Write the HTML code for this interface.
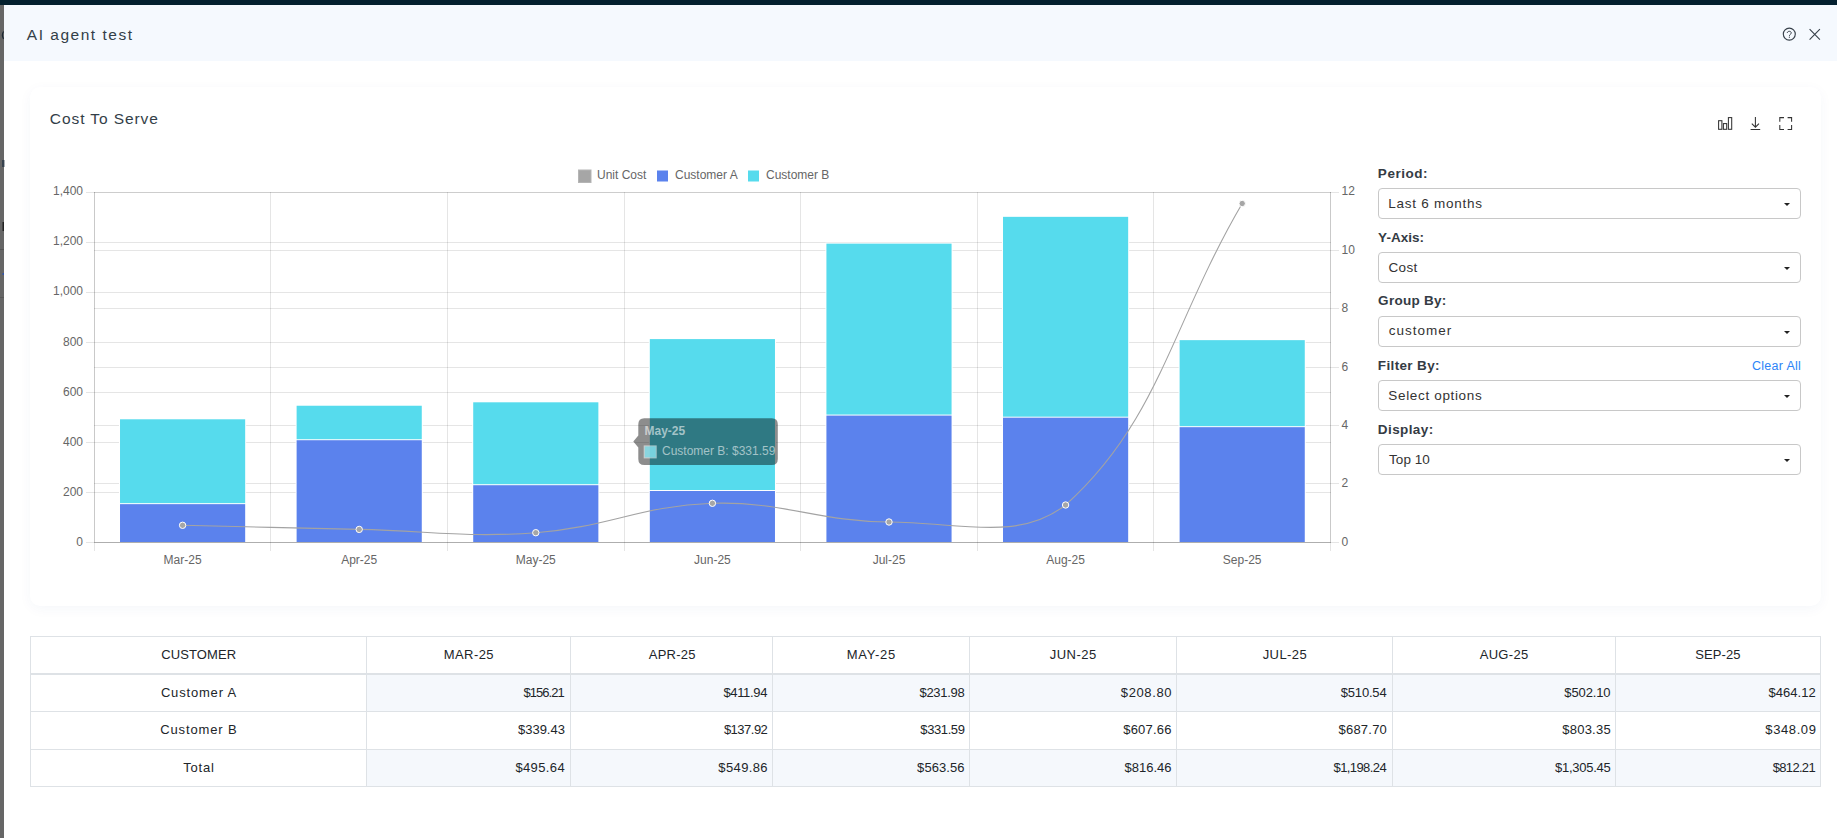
<!DOCTYPE html>
<html><head><meta charset="utf-8"><style>
*{box-sizing:border-box;margin:0;padding:0}
html,body{width:1837px;height:838px;overflow:hidden;background:#fff;font-family:"Liberation Sans",sans-serif}
.a{position:absolute}
</style></head><body>
<div class="a" style="left:0;top:0;width:1837px;height:5px;background:#03202f"></div>
<div class="a" style="left:0;top:5px;width:4px;height:833px;background:#666"></div>
<svg class="a" style="left:0;top:0" width="5" height="320"><path d="M3.6,31.5 Q1.2,35 3.6,38.8" stroke="#1d2a36" stroke-width="1.3" fill="none"/><rect x="2" y="160" width="2.5" height="7" fill="#2c3a48" opacity="0.8"/><rect x="2.5" y="222" width="1.5" height="9" fill="#222"/><rect x="0" y="249" width="4" height="1" fill="#555"/><rect x="2.5" y="273" width="1.5" height="2" fill="#3355aa"/><rect x="0" y="297" width="4" height="1" fill="#585858"/></svg>
<div class="a" style="left:4px;top:5px;width:1833px;height:56px;background:#f5f9fe"></div>
<div class="a" style="left:30px;top:87px;width:1790.7px;height:519px;border-radius:10px;background:#fff;box-shadow:0 3px 13px rgba(30,70,150,0.042)"></div>
<svg width="1837" height="838" viewBox="0 0 1837 838" style="position:absolute;left:0;top:0" font-family="Liberation Sans">
<g shape-rendering="crispEdges" stroke-width="1"><line x1="86" y1="192.5" x2="1330.5" y2="192.5" stroke="rgba(0,0,0,0.1)"/><line x1="86" y1="242.5" x2="1330.5" y2="242.5" stroke="rgba(0,0,0,0.1)"/><line x1="86" y1="292.5" x2="1330.5" y2="292.5" stroke="rgba(0,0,0,0.1)"/><line x1="86" y1="342.5" x2="1330.5" y2="342.5" stroke="rgba(0,0,0,0.1)"/><line x1="86" y1="392.5" x2="1330.5" y2="392.5" stroke="rgba(0,0,0,0.1)"/><line x1="86" y1="442.5" x2="1330.5" y2="442.5" stroke="rgba(0,0,0,0.1)"/><line x1="86" y1="492.5" x2="1330.5" y2="492.5" stroke="rgba(0,0,0,0.1)"/><line x1="86" y1="542.5" x2="1330.5" y2="542.5" stroke="rgba(0,0,0,0.1)"/><line x1="94.3" y1="192.5" x2="1339" y2="192.5" stroke="rgba(0,0,0,0.1)"/><line x1="94.3" y1="250.5" x2="1339" y2="250.5" stroke="rgba(0,0,0,0.1)"/><line x1="94.3" y1="308.5" x2="1339" y2="308.5" stroke="rgba(0,0,0,0.1)"/><line x1="94.3" y1="367.5" x2="1339" y2="367.5" stroke="rgba(0,0,0,0.1)"/><line x1="94.3" y1="425.5" x2="1339" y2="425.5" stroke="rgba(0,0,0,0.1)"/><line x1="94.3" y1="483.5" x2="1339" y2="483.5" stroke="rgba(0,0,0,0.1)"/><line x1="94.3" y1="542.5" x2="1339" y2="542.5" stroke="rgba(0,0,0,0.1)"/><line x1="94.5" y1="192.0" x2="94.5" y2="551.0" stroke="rgba(0,0,0,0.1)"/><line x1="270.5" y1="192.0" x2="270.5" y2="551.0" stroke="rgba(0,0,0,0.1)"/><line x1="447.5" y1="192.0" x2="447.5" y2="551.0" stroke="rgba(0,0,0,0.1)"/><line x1="624.5" y1="192.0" x2="624.5" y2="551.0" stroke="rgba(0,0,0,0.1)"/><line x1="800.5" y1="192.0" x2="800.5" y2="551.0" stroke="rgba(0,0,0,0.1)"/><line x1="977.5" y1="192.0" x2="977.5" y2="551.0" stroke="rgba(0,0,0,0.1)"/><line x1="1153.5" y1="192.0" x2="1153.5" y2="551.0" stroke="rgba(0,0,0,0.1)"/><line x1="1330.5" y1="192.0" x2="1330.5" y2="551.0" stroke="rgba(0,0,0,0.1)"/><line x1="94.5" y1="192.0" x2="94.5" y2="542.0" stroke="rgba(0,0,0,0.12)"/><line x1="1330.5" y1="192.0" x2="1330.5" y2="542.0" stroke="rgba(0,0,0,0.12)"/><line x1="94.3" y1="542.5" x2="1330.5" y2="542.5" stroke="rgba(0,0,0,0.15)"/></g>
<rect x="119.02" y="418.29" width="127.15" height="123.71" fill="#fff"/><rect x="120.02" y="419.29" width="125.15" height="83.86" fill="#56dbed"/><rect x="120.02" y="504.15" width="125.15" height="37.85" fill="#5b82ed"/><rect x="295.62" y="404.74" width="127.15" height="137.26" fill="#fff"/><rect x="296.62" y="405.74" width="125.15" height="33.48" fill="#56dbed"/><rect x="296.62" y="440.22" width="125.15" height="101.78" fill="#5b82ed"/><rect x="472.22" y="401.31" width="127.15" height="140.69" fill="#fff"/><rect x="473.22" y="402.31" width="125.15" height="81.90" fill="#56dbed"/><rect x="473.22" y="485.21" width="125.15" height="56.79" fill="#5b82ed"/><rect x="648.82" y="338.09" width="127.15" height="203.91" fill="#fff"/><rect x="649.82" y="339.09" width="125.15" height="150.92" fill="#56dbed"/><rect x="649.82" y="491.00" width="125.15" height="51.00" fill="#5b82ed"/><rect x="825.42" y="242.64" width="127.15" height="299.36" fill="#fff"/><rect x="826.42" y="243.64" width="125.15" height="170.93" fill="#56dbed"/><rect x="826.42" y="415.57" width="125.15" height="126.43" fill="#5b82ed"/><rect x="1002.02" y="215.84" width="127.15" height="326.16" fill="#fff"/><rect x="1003.02" y="216.84" width="125.15" height="199.84" fill="#56dbed"/><rect x="1003.02" y="417.68" width="125.15" height="124.32" fill="#5b82ed"/><rect x="1178.62" y="339.15" width="127.15" height="202.85" fill="#fff"/><rect x="1179.62" y="340.15" width="125.15" height="86.02" fill="#56dbed"/><rect x="1179.62" y="427.17" width="125.15" height="114.83" fill="#5b82ed"/>
<path d="M182.60,525.30 C253.24,526.94 288.56,527.92 359.20,529.40 C429.84,530.88 465.64,537.88 535.80,532.70 C606.92,527.44 641.47,505.45 712.40,503.30 C782.75,501.17 818.33,521.66 889.00,522.00 C959.61,522.34 1018.02,542.00 1065.60,505.00 C1159.30,420.50 1171.56,324.10 1242.20,203.50" fill="none" stroke="#a3a3a3" stroke-width="1.1"/>
<circle cx="182.60" cy="525.30" r="3.2" fill="#a6a6a6" stroke="#fff" stroke-width="1"/>
<circle cx="359.20" cy="529.40" r="3.2" fill="#a6a6a6" stroke="#fff" stroke-width="1"/>
<circle cx="535.80" cy="532.70" r="3.2" fill="#a6a6a6" stroke="#fff" stroke-width="1"/>
<circle cx="712.40" cy="503.30" r="3.2" fill="#a6a6a6" stroke="#fff" stroke-width="1"/>
<circle cx="889.00" cy="522.00" r="3.2" fill="#a6a6a6" stroke="#fff" stroke-width="1"/>
<circle cx="1065.60" cy="505.00" r="3.2" fill="#a6a6a6" stroke="#fff" stroke-width="1"/>
<circle cx="1242.20" cy="203.50" r="3.2" fill="#a6a6a6" stroke="#fff" stroke-width="1"/>
<g font-size="12" fill="#666"><text x="83" y="546" text-anchor="end">0</text><text x="83" y="496" text-anchor="end">200</text><text x="83" y="446" text-anchor="end">400</text><text x="83" y="396" text-anchor="end">600</text><text x="83" y="346" text-anchor="end">800</text><text x="83" y="295" text-anchor="end">1,000</text><text x="83" y="245" text-anchor="end">1,200</text><text x="83" y="195" text-anchor="end">1,400</text><text x="1341.5" y="546">0</text><text x="1341.5" y="487">2</text><text x="1341.5" y="429">4</text><text x="1341.5" y="371">6</text><text x="1341.5" y="312">8</text><text x="1341.5" y="254">10</text><text x="1341.5" y="195">12</text><text x="182.6" y="563.8" text-anchor="middle">Mar-25</text><text x="359.2" y="563.8" text-anchor="middle">Apr-25</text><text x="535.8" y="563.8" text-anchor="middle">May-25</text><text x="712.4" y="563.8" text-anchor="middle">Jun-25</text><text x="889.0" y="563.8" text-anchor="middle">Jul-25</text><text x="1065.6" y="563.8" text-anchor="middle">Aug-25</text><text x="1242.2" y="563.8" text-anchor="middle">Sep-25</text></g>
<g font-size="12" fill="#666"><rect x="578.5" y="170" width="12.5" height="12.5" fill="#a6a6a6" stroke="#b5b5b5" stroke-width="1"/><text x="597" y="178.7">Unit Cost</text><rect x="657" y="170.5" width="11" height="11" fill="#5b82ed"/><text x="675" y="178.7">Customer A</text><rect x="748" y="170.5" width="11" height="11" fill="#56dbed"/><text x="766" y="178.7">Customer B</text></g>
<path d="M644.3,418.3 H771.8 Q777.8,418.3 777.8,424.3 V458.9 Q777.8,464.9 771.8,464.9 H644.3 Q638.3,464.9 638.3,458.9 V447.6 L633.3,441.6 L638.3,435.6 V424.3 Q638.3,418.3 644.3,418.3 Z" fill="#000" fill-opacity="0.448"/>
<text x="644.5" y="434.8" font-size="12" font-weight="700" fill="#fff" fill-opacity="0.56">May-25</text>
<rect x="643.7" y="445.4" width="13" height="13" fill="#fff" fill-opacity="0.56"/>
<rect x="644.7" y="446.4" width="11" height="11" fill="#56dbed" fill-opacity="0.56"/>
<text x="662" y="454.9" font-size="12" fill="#fff" fill-opacity="0.56">Customer B: $331.59</text>
<g fill="none" stroke="#37404a" stroke-width="1.0">
<circle cx="1789.3" cy="34.1" r="6.0" stroke-width="1.15"/>
<path d="M1787.3,33.0 C1787.3,31.9 1788.2,31.3 1789.3,31.3 C1790.4,31.3 1791.3,32.0 1791.3,33.0 C1791.3,34.2 1789.4,34.4 1789.4,35.8"/>
</g>
<circle cx="1789.4" cy="37.2" r="0.6" fill="#37404a"/>
<path d="M1809.6,29.1 L1819.9,39.7 M1819.9,29.1 L1809.6,39.7" stroke="#37404a" stroke-width="1.1" fill="none"/>
<g fill="none" stroke="#333" stroke-width="1.05">
<rect x="1718.6" y="120.7" width="3.3" height="8.6"/><rect x="1723.4" y="123.6" width="3.3" height="5.7"/><rect x="1728.4" y="117.6" width="3.3" height="11.7"/>
<path d="M1755.4,117 V127.4 M1751.8,123.6 L1755.4,127.2 L1759,123.6 M1750.6,129.5 H1760.2"/>
<path d="M1779.8,121.7 V117.6 H1784 M1787.6,117.6 H1791.6 V121.7 M1791.6,125.1 V129.4 H1787.6 M1784,129.4 H1779.8 V125.1"/>
</g>
<rect x="1378.5" y="188.5" width="422" height="30" rx="3.5" fill="#fff" stroke="#c8c8c8" stroke-width="1"/>
<path d="M1784,203 L1790,203 L1787,206 Z" fill="#222"/>
<rect x="1378.5" y="252.5" width="422" height="30" rx="3.5" fill="#fff" stroke="#c8c8c8" stroke-width="1"/>
<path d="M1784,267 L1790,267 L1787,270 Z" fill="#222"/>
<rect x="1378.5" y="316.5" width="422" height="30" rx="3.5" fill="#fff" stroke="#c8c8c8" stroke-width="1"/>
<path d="M1784,331 L1790,331 L1787,334 Z" fill="#222"/>
<rect x="1378.5" y="380.5" width="422" height="30" rx="3.5" fill="#fff" stroke="#c8c8c8" stroke-width="1"/>
<path d="M1784,395 L1790,395 L1787,398 Z" fill="#222"/>
<rect x="1378.5" y="444.5" width="422" height="30" rx="3.5" fill="#fff" stroke="#c8c8c8" stroke-width="1"/>
<path d="M1784,459 L1790,459 L1787,462 Z" fill="#222"/>
<rect x="367" y="675" width="1453" height="36" fill="#f5f8fc"/>
<rect x="367" y="750" width="1453" height="36" fill="#f5f8fc"/>
<rect x="30" y="636" width="1791" height="1" fill="#dee2e6"/><rect x="30" y="711" width="1791" height="1" fill="#dee2e6"/><rect x="30" y="749" width="1791" height="1" fill="#dee2e6"/><rect x="30" y="786" width="1791" height="1" fill="#dee2e6"/><rect x="30" y="673" width="1791" height="2" fill="#dee2e6"/><rect x="30" y="636" width="1" height="151" fill="#dee2e6"/><rect x="366" y="636" width="1" height="151" fill="#dee2e6"/><rect x="570" y="636" width="1" height="151" fill="#dee2e6"/><rect x="772" y="636" width="1" height="151" fill="#dee2e6"/><rect x="969" y="636" width="1" height="151" fill="#dee2e6"/><rect x="1176" y="636" width="1" height="151" fill="#dee2e6"/><rect x="1392" y="636" width="1" height="151" fill="#dee2e6"/><rect x="1615" y="636" width="1" height="151" fill="#dee2e6"/><rect x="1820" y="636" width="1" height="151" fill="#dee2e6"/>
<text x="26.85" y="40.00" textLength="105.13" lengthAdjust="spacing" font-size="15.5" font-weight="400" fill="#333e48">AI agent test</text>
<text x="49.84" y="124.00" textLength="108.06" lengthAdjust="spacing" font-size="15.5" font-weight="400" fill="#333e48">Cost To Serve</text>
<text x="1377.85" y="178.00" textLength="49.65" lengthAdjust="spacing" font-size="13.5" font-weight="700" fill="#343b44">Period:</text>
<text x="1378.11" y="242.00" textLength="45.95" lengthAdjust="spacing" font-size="13.5" font-weight="700" fill="#343b44">Y-Axis:</text>
<text x="1378.10" y="305.00" textLength="68.22" lengthAdjust="spacing" font-size="13.5" font-weight="700" fill="#343b44">Group By:</text>
<text x="1377.85" y="370.00" textLength="61.65" lengthAdjust="spacing" font-size="13.5" font-weight="700" fill="#343b44">Filter By:</text>
<text x="1377.85" y="434.00" textLength="55.33" lengthAdjust="spacing" font-size="13.5" font-weight="700" fill="#343b44">Display:</text>
<text x="1751.89" y="370.20" textLength="49.01" lengthAdjust="spacing" font-size="12.5" font-weight="400" fill="#2d84f7">Clear All</text>
<text x="1388.15" y="208.00" textLength="93.79" lengthAdjust="spacing" font-size="13.5" font-weight="400" fill="#333">Last 6 months</text>
<text x="1388.62" y="272.00" textLength="28.54" lengthAdjust="spacing" font-size="13.5" font-weight="400" fill="#333">Cost</text>
<text x="1388.69" y="335.00" textLength="62.55" lengthAdjust="spacing" font-size="13.5" font-weight="400" fill="#333">customer</text>
<text x="1388.37" y="400.00" textLength="93.32" lengthAdjust="spacing" font-size="13.5" font-weight="400" fill="#333">Select options</text>
<text x="1389.08" y="464.00" textLength="40.72" lengthAdjust="spacing" font-size="13.5" font-weight="400" fill="#333">Top 10</text>
<text x="161.30" y="659.00" textLength="74.84" lengthAdjust="spacing" font-size="13" font-weight="400" fill="#212529">CUSTOMER</text>
<text x="443.69" y="659.00" textLength="49.91" lengthAdjust="spacing" font-size="13" font-weight="400" fill="#212529">MAR-25</text>
<text x="648.75" y="659.00" textLength="46.75" lengthAdjust="spacing" font-size="13" font-weight="400" fill="#212529">APR-25</text>
<text x="846.71" y="659.00" textLength="48.45" lengthAdjust="spacing" font-size="13" font-weight="400" fill="#212529">MAY-25</text>
<text x="1049.65" y="659.00" textLength="46.51" lengthAdjust="spacing" font-size="13" font-weight="400" fill="#212529">JUN-25</text>
<text x="1262.65" y="659.00" textLength="44.07" lengthAdjust="spacing" font-size="13" font-weight="400" fill="#212529">JUL-25</text>
<text x="1479.75" y="659.00" textLength="48.40" lengthAdjust="spacing" font-size="13" font-weight="400" fill="#212529">AUG-25</text>
<text x="1695.21" y="659.00" textLength="45.39" lengthAdjust="spacing" font-size="13" font-weight="400" fill="#212529">SEP-25</text>
<text x="160.88" y="697.00" textLength="75.33" lengthAdjust="spacing" font-size="13" font-weight="400" fill="#212529">Customer A</text>
<text x="160.21" y="734.00" textLength="76.52" lengthAdjust="spacing" font-size="13" font-weight="400" fill="#212529">Customer B</text>
<text x="183.22" y="772.00" textLength="30.67" lengthAdjust="spacing" font-size="13" font-weight="400" fill="#212529">Total</text>
<text x="523.38" y="697.00" textLength="41.45" lengthAdjust="spacing" font-size="13" font-weight="400" fill="#212529">$156.21</text>
<text x="518.09" y="734.00" textLength="46.77" lengthAdjust="spacing" font-size="13" font-weight="400" fill="#212529">$339.43</text>
<text x="515.39" y="772.00" textLength="49.23" lengthAdjust="spacing" font-size="13" font-weight="400" fill="#212529">$495.64</text>
<text x="723.39" y="697.00" textLength="44.03" lengthAdjust="spacing" font-size="13" font-weight="400" fill="#212529">$411.94</text>
<text x="723.89" y="734.00" textLength="43.94" lengthAdjust="spacing" font-size="13" font-weight="400" fill="#212529">$137.92</text>
<text x="718.37" y="772.00" textLength="49.17" lengthAdjust="spacing" font-size="13" font-weight="400" fill="#212529">$549.86</text>
<text x="919.47" y="697.00" textLength="45.23" lengthAdjust="spacing" font-size="13" font-weight="400" fill="#212529">$231.98</text>
<text x="920.37" y="734.00" textLength="44.51" lengthAdjust="spacing" font-size="13" font-weight="400" fill="#212529">$331.59</text>
<text x="917.09" y="772.00" textLength="47.45" lengthAdjust="spacing" font-size="13" font-weight="400" fill="#212529">$563.56</text>
<text x="1120.78" y="697.00" textLength="50.77" lengthAdjust="spacing" font-size="13" font-weight="400" fill="#212529">$208.80</text>
<text x="1123.18" y="734.00" textLength="48.36" lengthAdjust="spacing" font-size="13" font-weight="400" fill="#212529">$607.66</text>
<text x="1124.39" y="772.00" textLength="47.15" lengthAdjust="spacing" font-size="13" font-weight="400" fill="#212529">$816.46</text>
<text x="1340.78" y="697.00" textLength="45.84" lengthAdjust="spacing" font-size="13" font-weight="400" fill="#212529">$510.54</text>
<text x="1338.47" y="734.00" textLength="48.38" lengthAdjust="spacing" font-size="13" font-weight="400" fill="#212529">$687.70</text>
<text x="1333.58" y="772.00" textLength="53.04" lengthAdjust="spacing" font-size="13" font-weight="400" fill="#212529">$1,198.24</text>
<text x="1564.37" y="697.00" textLength="46.17" lengthAdjust="spacing" font-size="13" font-weight="400" fill="#212529">$502.10</text>
<text x="1562.18" y="734.00" textLength="48.53" lengthAdjust="spacing" font-size="13" font-weight="400" fill="#212529">$803.35</text>
<text x="1555.09" y="772.00" textLength="55.63" lengthAdjust="spacing" font-size="13" font-weight="400" fill="#212529">$1,305.45</text>
<text x="1768.38" y="697.00" textLength="47.44" lengthAdjust="spacing" font-size="13" font-weight="400" fill="#212529">$464.12</text>
<text x="1765.37" y="734.00" textLength="50.51" lengthAdjust="spacing" font-size="13" font-weight="400" fill="#212529">$348.09</text>
<text x="1772.78" y="772.00" textLength="42.85" lengthAdjust="spacing" font-size="13" font-weight="400" fill="#212529">$812.21</text>
</svg>
</body></html>
